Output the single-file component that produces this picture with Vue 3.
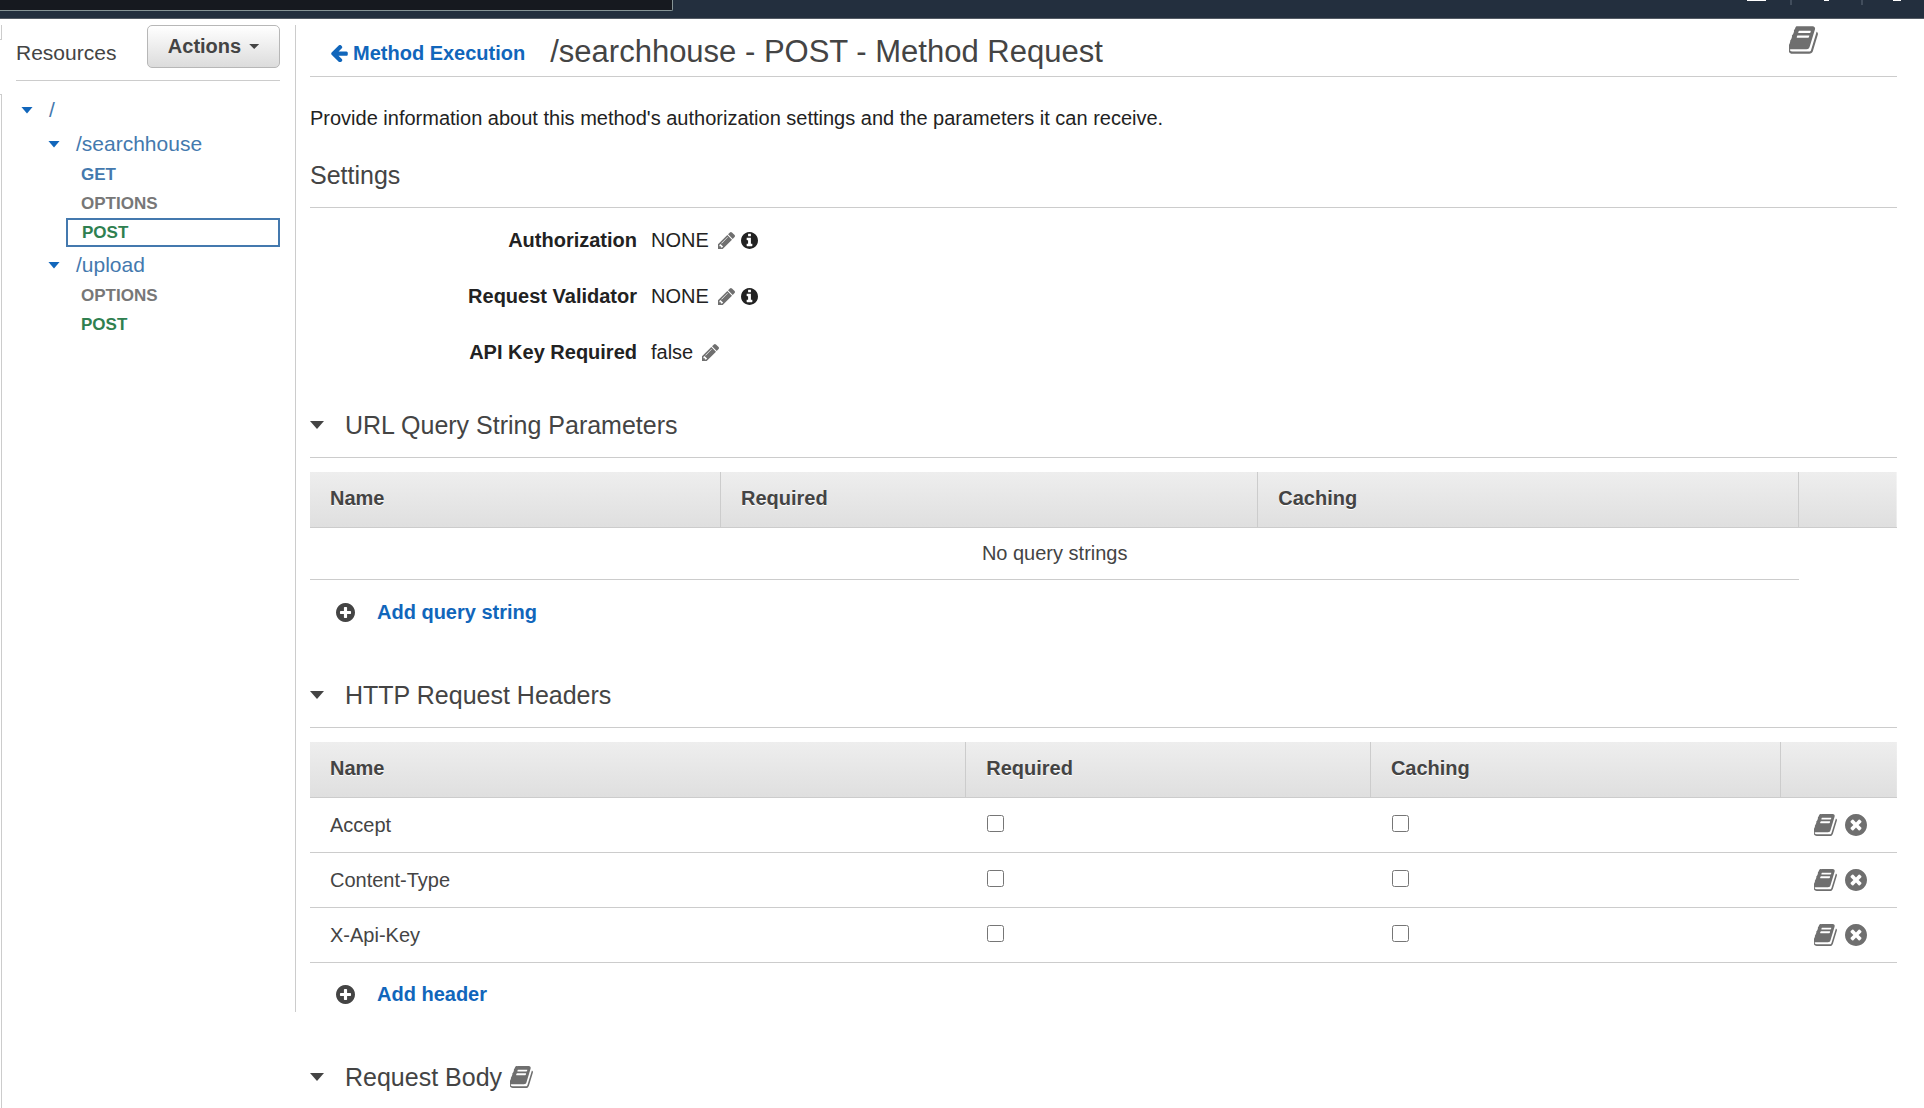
<script setup>
import { reactive } from 'vue'

const icons = {
  book: {
    box: '62 128 1606 1536',
    d: 'M1639 478q40 57 18 129l-275 906q-19 64-76.5 107.5t-122.5 43.5h-923q-77 0-148.5-53.5t-99.5-131.5q-24-67-2-127 0-4 3-27t4-37q1-8-3-21.5t-3-19.5q2-11 8-21t16.5-23.5 16.5-23.5q23-38 45-91.5t30-91.5q3-10 .5-30t-.5-28q3-11 17-28t17-23q21-36 42-92t25-90q1-9-2.5-32t.5-28q4-13 22-30.5t22-22.5q19-26 42.5-84.5t27.5-96.5q1-8-3-25.5t-2-26.5q2-8 9-18t18-23 17-21q8-12 16.5-30.5t15-35 16-36 19.5-32 26.5-23.5 36-11.5 47.5 5.5l-1 3q38-9 51-9h761q74 0 114 56t18 130l-274 906q-36 119-71.5 153.5t-128.5 34.5h-869q-27 0-38 15-11 16-1 43 24 70 144 70h923q29 0 56-15.5t35-41.5l300-987q7-22 5-57 38 15 59 43zm-1064 2q-4 13 2 22.5t20 9.5h608q13 0 25.5-9.5t16.5-22.5l21-64q4-13-2-22.5t-20-9.5h-608q-13 0-25.5 9.5t-16.5 22.5zm-83 256q-4 13 2 22.5t20 9.5h608q13 0 25.5-9.5t16.5-22.5l21-64q4-13-2-22.5t-20-9.5h-608q-13 0-25.5 9.5t-16.5 22.5z',
  },
  remove: {
    box: '128 128 1536 1536',
    d: 'M1277 1122q0-26-19-45l-181-181 181-181q19-19 19-45 0-27-19-46l-90-90q-19-19-46-19-26 0-45 19l-181 181-181-181q-19-19-45-19-27 0-46 19l-90 90q-19 19-19 46 0 26 19 45l181 181-181 181q-19 19-19 45 0 27 19 46l90 90q19 19 46 19 26 0 45-19l181-181 181 181q19 19 45 19 27 0 46-19l90-90q19-19 19-46zm387-226q0 209-103 385.5t-279.5 279.5-385.5 103-385.5-103-279.5-279.5-103-385.5 103-385.5 279.5-279.5 385.5-103 385.5 103 279.5 279.5 103 385.5z',
  },
  add: {
    box: '128 128 1536 1536',
    d: 'M1344 960v-128q0-26-19-45t-45-19h-256v-256q0-26-19-45t-45-19h-128q-26 0-45 19t-19 45v256h-256q-26 0-45 19t-19 45v128q0 26 19 45t45 19h256v256q0 26 19 45t45 19h128q26 0 45-19t19-45v-256h256q26 0 45-19t19-45zm320-64q0 209-103 385.5t-279.5 279.5-385.5 103-385.5-103-279.5-279.5-103-385.5 103-385.5 279.5-279.5 385.5-103 385.5 103 279.5 279.5 103 385.5z',
  },
  info: {
    box: '128 128 1536 1536',
    d: 'M1152 1376v-160q0-14-9-23t-23-9h-96v-512q0-14-9-23t-23-9h-320q-14 0-23 9t-9 23v160q0 14 9 23t23 9h96v320h-96q-14 0-23 9t-9 23v160q0 14 9 23t23 9h448q14 0 23-9t9-23zm-128-896v-160q0-14-9-23t-23-9h-192q-14 0-23 9t-9 23v160q0 14 9 23t23 9h192q14 0 23-9t9-23zm640 416q0 209-103 385.5t-279.5 279.5-385.5 103-385.5-103-279.5-279.5-103-385.5 103-385.5 279.5-279.5 385.5-103 385.5 103 279.5 279.5 103 385.5z',
  },
  pencil: {
    box: '128 149 1515 1515',
    d: 'M491 1536l91-91-235-235-91 91v107h128v128h107zm523-928q0-22-22-22-10 0-17 7l-542 542q-7 7-7 17 0 22 22 22 10 0 17-7l542-542q7-7 7-17zm-54-192l416 416-832 832h-416v-416zm683 96q0 53-37 90l-166 166-416-416 166-165q36-38 90-38 53 0 91 38l235 234q37 39 37 91z',
  },
  back: {
    box: '64 192 1472 1510',
    d: 'M1536 896v128q0 53-32.5 90.5t-84.5 37.5h-704l293 294q38 36 38 90t-38 90l-75 76q-37 37-90 37-52 0-91-37l-651-652q-37-37-37-90 0-52 37-91l651-650q38-38 91-38 52 0 90 38l75 74q38 38 38 91t-38 91l-293 293h704q52 0 84.5 37.5t32.5 90.5z',
  },
}

const resources = [
  {
    path: '/searchhouse',
    methods: [
      { name: 'GET', kind: 'get' },
      { name: 'OPTIONS', kind: 'options' },
      { name: 'POST', kind: 'post', selected: true },
    ],
  },
  {
    path: '/upload',
    methods: [
      { name: 'OPTIONS', kind: 'options' },
      { name: 'POST', kind: 'post' },
    ],
  },
]

const settings = [
  { label: 'Authorization', value: 'NONE', info: true },
  { label: 'Request Validator', value: 'NONE', info: true },
  { label: 'API Key Required', value: 'false', info: false },
]

const headers = reactive([
  { name: 'Accept', required: false, caching: false },
  { name: 'Content-Type', required: false, caching: false },
  { name: 'X-Api-Key', required: false, caching: false },
])
</script>

<template>
  <div class="page">
    <header class="topbar">
      <div class="search"></div>
      <div class="tools">
        <i class="tool wide"></i>
        <i class="divider"></i>
        <i class="tool"></i>
        <i class="divider"></i>
        <i class="tool round"></i>
      </div>
    </header>

    <div class="columns">
      <div class="rail">
        <div class="rail-top"></div>
        <div class="rail-rest"></div>
      </div>

      <aside class="sidebar">
        <div class="sidebar-head">
          <h2>Resources</h2>
          <button class="actions" type="button">Actions <i class="caret small"></i></button>
        </div>
        <nav class="tree" aria-label="Resources">
          <div class="node root"><i class="caret"></i><a href="#">/</a></div>
          <div v-for="r in resources" :key="r.path" class="branch">
            <div class="node"><i class="caret"></i><a href="#">{{ r.path }}</a></div>
            <a
              v-for="m in r.methods"
              :key="m.name"
              href="#"
              class="method"
              :class="[m.kind, { selected: m.selected }]"
            >{{ m.name }}</a>
          </div>
        </nav>
      </aside>

      <main class="content">
        <div class="title-bar">
          <a class="back" href="#">
            <svg class="icon-back" :viewBox="icons.back.box"><path :d="icons.back.d" /></svg>
            Method Execution
          </a>
          <h1>/searchhouse - POST - Method Request</h1>
          <button class="icon-button docs" type="button" aria-label="Documentation">
            <svg class="icon-book-large" :viewBox="icons.book.box"><path :d="icons.book.d" /></svg>
          </button>
        </div>

        <p class="intro">Provide information about this method's authorization settings and the parameters it can receive.</p>

        <h3 class="heading settings-heading">Settings</h3>
        <dl class="settings">
          <div v-for="s in settings" :key="s.label" class="setting">
            <dt>{{ s.label }}</dt>
            <dd>
              {{ s.value }}
              <button class="icon-button edit" type="button" :aria-label="'Edit ' + s.label">
                <svg class="icon-small" :viewBox="icons.pencil.box"><path :d="icons.pencil.d" /></svg>
              </button>
              <button v-if="s.info" class="icon-button info" type="button" :aria-label="'About ' + s.label">
                <svg class="icon-small" :viewBox="icons.info.box"><path :d="icons.info.d" /></svg>
              </button>
            </dd>
          </div>
        </dl>

        <section>
          <h3 class="heading"><i class="caret large"></i>URL Query String Parameters</h3>
          <table class="query">
            <colgroup><col class="c1" /><col class="c2" /><col class="c3" /><col /></colgroup>
            <thead>
              <tr><th>Name</th><th>Required</th><th>Caching</th><th></th></tr>
            </thead>
            <tbody>
              <tr><td class="empty" colspan="3">No query strings</td></tr>
            </tbody>
          </table>
          <button class="add" type="button">
            <svg class="icon-add" :viewBox="icons.add.box"><path :d="icons.add.d" /></svg>
            Add query string
          </button>
        </section>

        <section>
          <h3 class="heading"><i class="caret large"></i>HTTP Request Headers</h3>
          <table class="headers">
            <colgroup><col class="c1" /><col class="c2" /><col class="c3" /><col /></colgroup>
            <thead>
              <tr><th>Name</th><th>Required</th><th>Caching</th><th></th></tr>
            </thead>
            <tbody>
              <tr v-for="h in headers" :key="h.name">
                <td>{{ h.name }}</td>
                <td><input v-model="h.required" type="checkbox" :aria-label="h.name + ' required'" /></td>
                <td><input v-model="h.caching" type="checkbox" :aria-label="h.name + ' caching'" /></td>
                <td>
                  <div class="row-actions">
                    <button class="icon-button" type="button" :aria-label="'Documentation for ' + h.name">
                      <svg class="icon-book" :viewBox="icons.book.box"><path :d="icons.book.d" /></svg>
                    </button>
                    <button class="icon-button" type="button" :aria-label="'Remove ' + h.name">
                      <svg class="icon-remove" :viewBox="icons.remove.box"><path :d="icons.remove.d" /></svg>
                    </button>
                  </div>
                </td>
              </tr>
            </tbody>
          </table>
          <button class="add" type="button">
            <svg class="icon-add" :viewBox="icons.add.box"><path :d="icons.add.d" /></svg>
            Add header
          </button>
        </section>

        <section>
          <h3 class="heading plain">
            <i class="caret large"></i>Request Body
            <button class="icon-button body-docs" type="button" aria-label="Request body documentation">
              <svg class="icon-book" :viewBox="icons.book.box"><path :d="icons.book.d" /></svg>
            </button>
          </h3>
        </section>
      </main>
    </div>
  </div>
</template>

<style>
body {
  margin: 0;
  background: #fff;
}
</style>

<style scoped>
.page {
  display: flex;
  flex-direction: column;
  min-height: 100vh;
  font: 20px/24px "Liberation Sans", Arial, sans-serif;
  color: #444;
}
.page * {
  box-sizing: border-box;
}
h1, h2, h3, p, dl, dd {
  margin: 0;
  font-weight: normal;
}
a {
  text-decoration: none;
}
button {
  font: inherit;
  cursor: pointer;
}
svg {
  display: block;
  fill: currentColor;
}

.topbar {
  display: flex;
  justify-content: space-between;
  align-items: flex-start;
  height: 19px;
  background: #232f3e;
  border-bottom: 1px solid #545b64;
}
.search {
  width: 35%;
  height: 11px;
  background: #16191f;
  border: solid #879596;
  border-width: 0 1px 1px 0;
  border-bottom-right-radius: 2px;
}
.tools {
  display: flex;
  align-items: flex-start;
  margin-right: 23px;
}
.tool {
  width: 5px;
  height: 1px;
  margin: 0 32px;
  background: #fff;
}
.tool.wide {
  width: 19px;
  margin: 0 24px 0 0;
}
.tool.round {
  width: 8px;
  margin: 0 0 0 30px;
}
.divider {
  width: 2px;
  height: 5px;
  background: #414d5c;
}

.columns {
  display: flex;
  flex: 1;
}
.rail {
  display: flex;
  flex-direction: column;
  gap: 54px;
  width: 2px;
  padding-top: 6px;
}
.rail-top {
  height: 15px;
  border: solid #ccc;
  border-width: 0 1px 1px 0;
}
.rail-rest {
  flex: 1;
  border: solid #ccc;
  border-width: 1px 1px 0 0;
}

.sidebar {
  flex: none;
  width: 294px;
  height: calc(100vh - 121px);
  margin-top: 6px;
  padding: 0 15px 0 14px;
  border-right: 1px solid #ccc;
}
.sidebar-head {
  display: flex;
  justify-content: space-between;
  height: 56px;
  border-bottom: 1px solid #ccc;
}
.sidebar-head h2 {
  padding-top: 16px;
  font-size: 21px;
}
.actions {
  display: flex;
  align-items: center;
  justify-content: center;
  gap: 8px;
  width: 133px;
  height: 43px;
  padding: 0 0 2px;
  border: 1px solid #b7b7b7;
  border-radius: 5px;
  background: linear-gradient(#fff, #dcdcdc);
  color: #444;
  font-weight: bold;
}

.caret {
  flex: none;
  width: 12px;
  height: 7px;
  background: currentColor;
  clip-path: polygon(0 0, 100% 0, 50% 100%);
}
.caret.small {
  width: 10px;
  height: 5px;
  margin-top: 2px;
}
.caret.large {
  width: 14px;
  height: 8px;
  margin-right: 21px;
}

.tree {
  padding-top: 11px;
}
.node {
  display: flex;
  align-items: center;
  gap: 16px;
  height: 34px;
  padding: 2px 0 0 32px;
  font-size: 21px;
  color: #1166bb;
}
.node a {
  color: #4479ae;
}
.node.root {
  padding-left: 5px;
}
.method {
  display: flex;
  align-items: center;
  height: 29px;
  margin-left: 50px;
  padding-left: 15px;
  font-size: 17px;
  font-weight: bold;
}
.method.selected {
  padding-left: 14px;
  border: 2px solid #4479ae;
}
.get {
  color: #4479ae;
}
.options {
  color: #777;
}
.post {
  color: #2f8050;
}

.content {
  flex: 1;
  min-width: 0;
  padding: 0 27px 0 14px;
}
.title-bar {
  display: flex;
  align-items: flex-end;
  height: 58px;
  padding: 7px 79px 6px 21px;
  border-bottom: 1px solid #ccc;
}
.back {
  display: flex;
  align-items: center;
  gap: 5px;
  margin: 0 25px 5px 0;
  color: #1166bb;
  font-weight: bold;
}
.icon-back {
  width: 17px;
  height: 17px;
}
h1 {
  font-size: 31px;
  line-height: 36px;
}
.icon-button {
  display: block;
  padding: 0;
  border: 0;
  background: none;
  color: #6f6f6f;
}
.docs {
  align-self: flex-start;
  margin-left: auto;
}
.icon-book-large {
  width: 29px;
  height: 28px;
}
.icon-book {
  width: 23px;
  height: 22px;
}
.icon-remove {
  width: 22px;
  height: 22px;
}
.icon-small {
  width: 17px;
  height: 17px;
}
.icon-add {
  width: 19px;
  height: 19px;
}

.intro {
  margin-top: 29px;
  color: #222;
}
.heading {
  display: flex;
  align-items: center;
  padding-bottom: 17px;
  border-bottom: 1px solid #ccc;
  font-size: 25px;
  line-height: 30px;
}
.heading.plain {
  padding: 0;
  border: 0;
}
.settings-heading {
  margin-top: 30px;
}
.body-docs {
  margin-left: 8px;
}
.settings {
  display: flex;
  flex-direction: column;
  gap: 32px;
  margin: 20px 0 46px;
  color: #222;
}
.setting {
  display: flex;
  gap: 14px;
}
dt {
  width: 327px;
  text-align: right;
  font-weight: bold;
}
dd {
  display: flex;
  align-items: center;
}
.edit {
  margin: 0 6px 0 9px;
}
.info {
  color: #222;
}

section + section {
  margin-top: 56px;
}
table {
  width: 100%;
  margin: 14px 0 20px;
  table-layout: fixed;
  border-collapse: separate;
  border-spacing: 0;
}
.headers {
  margin-bottom: 19px;
}
.query .c1 {
  width: 25.9%;
}
.query .c2 {
  width: 33.85%;
}
.query .c3 {
  width: 34.1%;
}
.headers .c1 {
  width: 41.35%;
}
.headers .c2 {
  width: 25.5%;
}
.headers .c3 {
  width: 25.85%;
}
thead {
  background: linear-gradient(#eee, #dfdfdf);
}
th {
  padding: 14px 20px 17px;
  border: solid #ccc;
  border-width: 0 1px 1px 0;
  text-align: left;
  text-shadow: 0 1px 0 #fff;
}
th:last-child {
  border-right: 0;
}
td {
  padding: 15px 20px;
  border-bottom: 1px solid #ccc;
}
td.empty {
  padding: 13px 20px 14px;
  text-align: center;
}
input[type='checkbox'] {
  display: block;
  width: 17px;
  height: 17px;
  margin: 0 0 3px 1px;
}
.row-actions {
  display: flex;
  gap: 8px;
  margin-left: 13px;
}
.add {
  display: flex;
  align-items: center;
  gap: 22px;
  padding: 0 0 0 26px;
  border: 0;
  background: none;
  color: #1166bb;
  font-weight: bold;
}
.icon-add {
  color: #444;
}
</style>
